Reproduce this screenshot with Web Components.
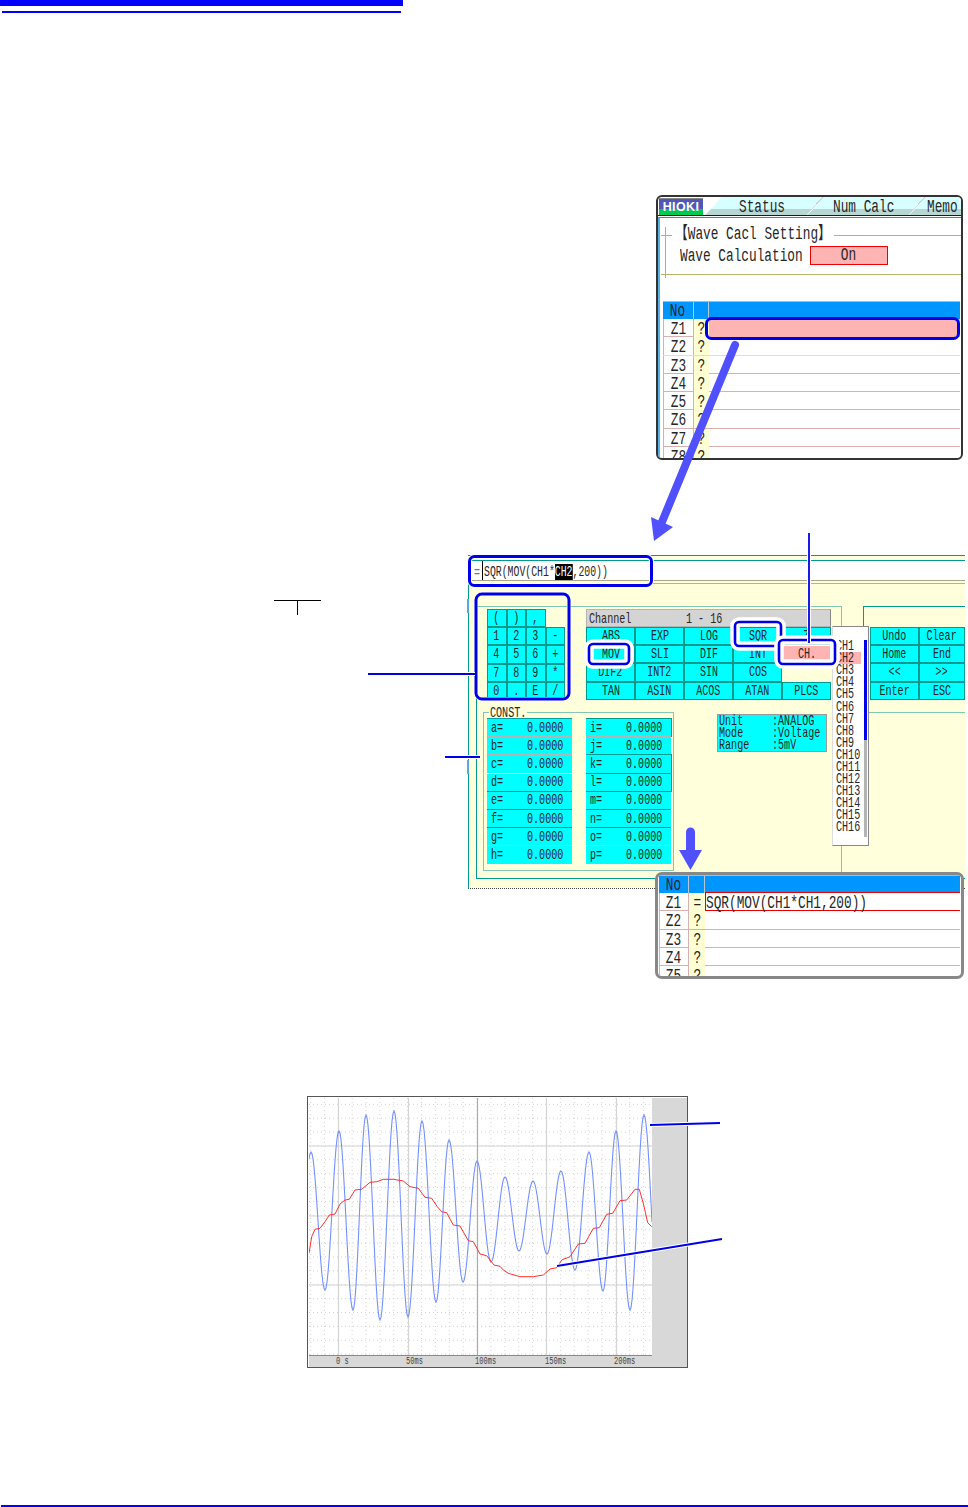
<!DOCTYPE html>
<html>
<head>
<meta charset="utf-8">
<title>Wave Calc</title>
<style>
    html, body { margin: 0; background: #fff; }
</style>
</head>
<body>
<hm-page>
    <hm-calc-window>
        <hm-calc-table rows="8" selected style="--no-w:31px;--flag-w:15px"></hm-calc-table>
    </hm-calc-window>
    <hm-editor></hm-editor>
    <hm-result-window>
        <hm-calc-table rows="5" formula="SQR(MOV(CH1*CH1,200))" style="--no-w:30px;--flag-w:16px"></hm-calc-table>
    </hm-result-window>
    <hm-wave-chart></hm-wave-chart>
    <hm-callouts></hm-callouts>
</hm-page>

<script>
const SCREEN_FONT = '"Liberation Mono","Noto Sans CJK JP",monospace';
const CYAN = '#00ffff';
const CREAM = '#ffffdc';
const TEAL = '#009a90';
const TEAL_LIGHT = '#80c8b4';
const PINK = '#ffb4b4';

// the instrument font is tall and narrow, so a mono font gets squeezed
class HmText extends HTMLElement {
    constructor() {
        super();
        this.attachShadow({ mode: 'open' });
        this.shadowRoot.innerHTML = `<style>
        :host {
            display: inline-block;
            font: 14.4px/12px ${SCREEN_FONT};
            color: #262626;
            white-space: pre;
            transform: scaleX(.7);
            transform-origin: var(--hm-origin, left center);
        }
        :host([big]) {
            font-size: 17.5px;
            line-height: 15px;
            transform: scaleX(.73);
        }
        </style><slot></slot>`;
    }
}
customElements.define('hm-t', HmText);

class HmPage extends HTMLElement {
    constructor() {
        super();
        this.attachShadow({ mode: 'open' });
        this.shadowRoot.innerHTML = `<style>
        :host {
            display: flex;
            flex-direction: column;
            position: relative;
            width: 968px;
            height: 1507px;
            overflow: hidden;
            background: #fff;
        }
        .top { width: 403px; height: 6px; background: #0000ff; }
        .sub { width: 399px; height: 2px; margin: 5px 0 0 2px; background: #0000ff; }
        .bottom { height: 2px; margin: auto 0 0 1px; background: #0000ff; }
        </style>
        <div class="top"></div>
        <div class="sub"></div>
        <slot></slot>
        <div class="bottom"></div>`;
    }
}
customElements.define('hm-page', HmPage);

class HmKey extends HTMLElement {
    constructor() {
        super();
        this.attachShadow({ mode: 'open' });
        this.shadowRoot.innerHTML = `<style>
        :host {
            --hm-origin: center;
            display: flex;
            align-items: center;
            justify-content: center;
            box-sizing: border-box;
            min-width: 0;
            background: ${CYAN};
            border: 1px solid ${TEAL};
        }
        :host([active]) {
            background: ${PINK};
            border-color: #fff;
        }
        </style><hm-t><slot></slot></hm-t>`;
    }
}
customElements.define('hm-key', HmKey);

class HmCalcTable extends HTMLElement {
    constructor() {
        super();
        this.attachShadow({ mode: 'open' });
    }
    connectedCallback() {
        const count = Number(this.getAttribute('rows')) || 4;
        const formula = this.getAttribute('formula') || '';
        const selected = this.hasAttribute('selected');
        let rows = '';
        for (let n = 1; n <= count; n++) {
            const first = n == 1;
            const cls = first ? (selected ? 'pink' : (formula ? 'redline' : '')) : '';
            rows += `<div class="row ${n == 2 && selected ? 'soft' : ''}">
                <div class="no"><hm-t big>Z${n}</hm-t></div>
                <div class="flag"><hm-t big>${first && formula ? '=' : '?'}</hm-t></div>
                <div class="text ${cls}"><hm-t big>${first ? formula : ''}</hm-t></div>
            </div>`;
        }
        this.shadowRoot.innerHTML = `<style>
        :host { display: block; --hm-origin: center; }
        .row {
            display: grid;
            grid-template-columns: var(--no-w) var(--flag-w) 1fr;
            height: 18.3px;
            box-sizing: border-box;
            border-bottom: 1px solid #d8b0b0;
        }
        .row.soft { border-bottom-color: #ead8e0; }
        .row > div { display: flex; align-items: center; justify-content: center; min-width: 0; box-sizing: border-box; padding-top: 3px; }
        .no { border-left: 1px solid #d8b0b0; border-right: 1px solid #d8b0b0; }
        .flag { background: #ffffd4; }
        .row > .text { --hm-origin: left center; justify-content: flex-start; }
        .pink { background: ${PINK}; }
        .redline { border: 1px solid #e80000; border-right: 0; height: 19px; margin-top: -1px; background: #fff; }
        .head {
            height: 18px;
            background: #0096ff;
            border-top: 1px solid #b8b8b8;
            border-bottom: 0;
        }
        .head > div { padding-top: 2px !important; }
        .head .no { border: 0; border-right: 1px solid #b8c8d8; }
        .head .flag { background: none; border-right: 1px solid #b8c8d8; }
        </style>
        <div class="row head">
            <div class="no"><hm-t big>No</hm-t></div>
            <div class="flag"></div>
            <div></div>
        </div>
        ${rows}`;
    }
}
customElements.define('hm-calc-table', HmCalcTable);

class HmCalcWindow extends HTMLElement {
    constructor() {
        super();
        this.attachShadow({ mode: 'open' });
        this.shadowRoot.innerHTML = `<style>
        :host {
            display: block;
            position: absolute;
            left: 656px;
            top: 195px;
            width: 307px;
            height: 265px;
            box-sizing: border-box;
            border: 2px solid #333;
            border-radius: 6px;
            background: #fff;
            overflow: hidden;
        }
        .bar {
            display: flex;
            height: 18px;
            box-sizing: border-box;
            padding: 1px 0 0 1px;
        }
        .logo {
            width: 44px;
            height: 17px;
            flex: none;
            display: flex;
            align-items: flex-start;
            justify-content: center;
            box-sizing: border-box;
            padding-top: 2px;
            border-top: 1px solid #888;
            background: linear-gradient(#5058b4 0 62%, #00c850 62%);
            color: #fff;
            font: bold 12.5px/1 "Liberation Sans", sans-serif;
            letter-spacing: .4px;
        }
        .tabs {
            flex: 1;
            min-width: 0;
            margin: -1px 0 0 2px;
            height: 18px;
            display: flex;
            clip-path: polygon(17px 0, 100% 0, 100% 100%, 0 100%);
            background: linear-gradient(#d8ffff 0 12px, #b8d6d2 12px);
        }
        .tab {
            position: relative;
            flex: 0 0 102px;
            min-width: 0;
            box-sizing: border-box;
            display: flex;
            align-items: center;
            padding-top: 3px;
        }
        .tab hm-t { flex: none; }
        .tab::before {
            content: "";
            position: absolute;
            left: 0;
            top: 0;
            width: 17px;
            height: 100%;
            background: linear-gradient(to bottom right, transparent calc(50% - 1px), #c4c4c4 calc(50% - 1px), #fff calc(50% + .5px), transparent calc(50% + .5px));
        }
        .tab.memo { flex-basis: 52px; padding-left: 18px; }
        .rule { height: 1px; background: #00204a; }
        .panel {
            position: relative;
            height: 100%;
            border-left: 2px solid #58b0e8;
            margin-top: 1px;
            border-top: 1px solid #0096ff;
            box-sizing: border-box;
        }
        .section { position: relative; margin: 9px 0 0 1px; }
        .section::before {
            content: "";
            position: absolute;
            left: 4px;
            top: 0;
            width: 1px;
            height: 51px;
            background: #b4b46e;
        }
        .title { display: grid; grid-template-columns: 11px 162px 1fr; height: 16px; align-items: center; }
        .title i { display: block; height: 1px; background: #b4b46e; }
        .title hm-t { margin: -1px 0 0 3px; }
        .wave { display: grid; grid-template-columns: 130px 78px; margin: 3px 0 0 0; padding-left: 19px; height: 19px; align-items: center; }
        .wave > hm-t { margin-top: 1px; }
        .on {
            height: 19px;
            box-sizing: border-box;
            display: flex;
            align-items: center;
            justify-content: center;
            --hm-origin: center;
            background: ${PINK};
            border: 1px solid #f00000;
        }
        .line { height: 1px; margin-top: 9px; background: #b4b46e; }
        .table { margin: 26px 1px 0 3px; }
        </style>
        <div class="bar">
            <div class="logo">HIOKI</div>
            <div class="tabs">
                <div class="tab" style="padding-left:34px"><hm-t big>Status</hm-t></div>
                <div class="tab" style="padding-left:26px"><hm-t big>Num Calc</hm-t></div>
                <div class="tab memo"><hm-t big>Memo</hm-t></div>
            </div>
        </div>
        <div class="rule"></div>
        <div class="panel">
            <div class="section">
                <div class="title"><i></i><hm-t big>【Wave Cacl Setting】</hm-t><i></i></div>
                <div class="wave"><hm-t big>Wave Calculation</hm-t><div class="on"><hm-t big>On</hm-t></div></div>
                <div class="line"></div>
            </div>
            <div class="table"><slot></slot></div>
        </div>`;
    }
}
customElements.define('hm-calc-window', HmCalcWindow);

class HmResultWindow extends HTMLElement {
    constructor() {
        super();
        this.attachShadow({ mode: 'open' });
        this.shadowRoot.innerHTML = `<style>
        :host {
            display: block;
            position: absolute;
            left: 655px;
            top: 872px;
            width: 309px;
            height: 107px;
            box-sizing: border-box;
            border: 3px solid #888;
            border-radius: 7px;
            padding: 0 1px 0 1px;
            background: #fff;
            overflow: hidden;
        }
        </style><slot></slot>`;
    }
}
customElements.define('hm-result-window', HmResultWindow);

class HmKeypad extends HTMLElement {
    constructor() {
        super();
        this.attachShadow({ mode: 'open' });
        const keys = ['(', ')', ',', '', '1', '2', '3', '-', '4', '5', '6', '+', '7', '8', '9', '*', '0', '.', 'E', '/'];
        this.shadowRoot.innerHTML = `<style>
        :host {
            display: grid;
            grid-template-columns: repeat(4, 19.5px);
            grid-auto-rows: 18.2px;
            flex: none;
        }
        </style>` + keys.map(k => k ? `<hm-key>${k}</hm-key>` : '<span></span>').join('');
    }
}
customElements.define('hm-keypad', HmKeypad);

class HmChannelPanel extends HTMLElement {
    constructor() {
        super();
        this.attachShadow({ mode: 'open' });
        const keys = ['ABS', 'EXP', 'LOG', 'SQR', 'Z', 'MOV', 'SLI', 'DIF', 'INT', 'CH.',
            'DIF2', 'INT2', 'SIN', 'COS', '', 'TAN', 'ASIN', 'ACOS', 'ATAN', 'PLCS'];
        this.shadowRoot.innerHTML = `<style>
        :host { display: block; width: 245px; margin-left: 21px; flex: none; }
        .head {
            display: flex;
            height: 18px;
            box-sizing: border-box;
            align-items: center;
            padding: 1px 0 0 2px;
            background: #d4d4d4;
            border: 1px solid #b4b4b4;
            border-right-color: #888;
        }
        .head hm-t:last-child { margin-left: 37px; }
        .grid { display: grid; grid-template-columns: repeat(5, 49px); grid-auto-rows: 18.2px; }
        </style>
        <div class="head"><hm-t>Channel</hm-t><hm-t>1 - 16</hm-t></div>
        <div class="grid">` + keys.map(k => k ? `<hm-key ${k == 'CH.' ? 'active' : ''}>${k}</hm-key>` : '<span></span>').join('') + `</div>`;
    }
}
customElements.define('hm-channel-panel', HmChannelPanel);

class HmConstPanel extends HTMLElement {
    constructor() {
        super();
        this.attachShadow({ mode: 'open' });
        const left = ['a', 'b', 'c', 'd', 'e', 'f', 'g', 'h'];
        const right = ['i', 'j', 'k', 'l', 'm', 'n', 'o', 'p'];
        const leftEdge = ['#00a0a0', '#b4b4b4', '#b4b4b4', '#f0ffff', TEAL, TEAL, TEAL, '#a0d0d0'];
        const rightEdge = [TEAL, '#b4b4b4', TEAL, TEAL, TEAL, TEAL, TEAL, '#a0d0d0'];
        const cell = (name, edge, boxed) => `<div class="cell ${boxed ? 'boxed' : ''}" style="border-top-color:${edge}">
            <hm-t>${name}=</hm-t><hm-t>0.0000</hm-t></div>`;
        this.shadowRoot.innerHTML = `<style>
        :host {
            display: block;
            position: relative;
            width: 191px;
            height: 159px;
            box-sizing: border-box;
            margin-left: 6px;
            padding: 5px 0 0 3px;
            border: 1px solid ${TEAL_LIGHT};
            flex: none;
        }
        .legend { position: absolute; left: 5px; top: -7px; padding: 0 1px; width: 36px; height: 12px; line-height: 12px; background: ${CREAM}; }
        .cols { display: grid; grid-template-columns: 85px 85px; column-gap: 13.5px; }
        .col { display: grid; grid-template-columns: minmax(0, 1fr); grid-auto-rows: 18.2px; }
        .cell {
            display: grid;
            grid-template-columns: 36px minmax(0, 1fr);
            align-items: center;
            box-sizing: border-box;
            padding-left: 4px;
            background: ${CYAN};
            border-top: 1px solid;
        }
        .cell.boxed { box-shadow: 1px 1px 0 ${TEAL}, 1px 0 0 ${TEAL}; }
        </style>
        <div class="legend"><hm-t>CONST.</hm-t></div>
        <div class="cols">
            <div class="col">${left.map((n, i) => cell(n, leftEdge[i], false)).join('')}</div>
            <div class="col">${right.map((n, i) => cell(n, rightEdge[i], i == 0 || i == 2 || i == 3)).join('')}</div>
        </div>`;
    }
}
customElements.define('hm-const-panel', HmConstPanel);

class HmChannelMenu extends HTMLElement {
    constructor() {
        super();
        this.attachShadow({ mode: 'open' });
        let items = '';
        for (let n = 1; n <= 16; n++) {
            items += `<div class="item ${n == 2 ? 'on' : ''}"><hm-t>CH${n}</hm-t></div>`;
        }
        this.shadowRoot.innerHTML = `<style>
        :host {
            display: flex;
            position: absolute;
            left: 355px;
            top: 20px;
            width: 37px;
            height: 220px;
            box-sizing: border-box;
            background: #fff;
            border: 1px solid #888;
            border-left-color: #ddd;
            padding-top: 13px;
        }
        .list { flex: 1; min-width: 0; }
        .item { height: 12.1px; display: flex; align-items: center; padding-left: 3px; }
        .item.on { background: linear-gradient(${PINK}, ${PINK}) 6px 0 / 22px 100% no-repeat; }
        .track { width: 3px; height: 197px; margin-right: 1px; background: #b4b4b4; }
        .thumb { height: 100px; background: #0000e8; }
        </style>
        <div class="list">${items}</div>
        <div class="track"><div class="thumb"></div></div>`;
    }
}
customElements.define('hm-channel-menu', HmChannelMenu);

class HmEditor extends HTMLElement {
    constructor() {
        super();
        this.attachShadow({ mode: 'open' });
        const side = ['Undo', 'Clear', 'Home', 'End', '<<', '>>', 'Enter', 'ESC'];
        this.shadowRoot.innerHTML = `<style>
        :host {
            display: block;
            position: absolute;
            left: 468px;
            top: 555px;
            width: 497px;
            height: 334px;
            background: ${CREAM};
        }
        .head { border-top: 1px solid ${TEAL}; border-bottom: 1px solid ${TEAL_LIGHT}; height: 29px; box-sizing: border-box; }
        .input {
            display: flex;
            align-items: center;
            height: 21px;
            margin-top: 4px;
            box-sizing: border-box;
            padding-left: 6px;
            background: #fff;
            border-top: 1px solid ${TEAL};
            border-bottom: 1px solid #a8a888;
        }
        .input .eq { width: 8px; padding-top: 3px; }
        .input .eq hm-t { color: #777; }
        .value { border-left: 1px solid #000; height: 100%; box-sizing: border-box; display: flex; align-items: center; padding: 3px 0 0 1px; }
        .value hm-t { transform: scaleX(.683); }
        mark { background: #000; color: #fff; }
        .body {
            position: relative;
            height: 305px;
            box-sizing: border-box;
            border-left: 1px solid ${TEAL};
            border-bottom: 1px dotted #444;
            padding: 22px 0 0 7px;
        }
        .tick { position: absolute; left: -2px; width: 2px; height: 14px; background: #58a8e0; }
        .frames {
            position: relative;
            display: flex;
            height: 273px;
            box-sizing: border-box;
            border-left: 1px solid ${TEAL};
            border-bottom: 1px solid ${TEAL};
        }
        .left {
            width: 365px;
            flex: none;
            box-sizing: border-box;
            border-top: 1px solid ${TEAL_LIGHT};
            border-right: 1px solid ${TEAL_LIGHT};
            padding-top: 2px;
        }
        .top { display: flex; margin-left: 10px; height: 91px; }
        .bottom { display: flex; margin-top: 12px; }
        .info {
            width: 110px;
            height: 38px;
            box-sizing: border-box;
            margin: 2px 0 0 43px;
            padding: 0 1px;
            background: ${CYAN};
            border: 1px solid #999;
            display: grid;
            grid-template-columns: 53px minmax(0, 1fr);
            grid-auto-rows: 12px;
            align-items: center;
            flex: none;
        }
        .right {
            width: 102px;
            flex: none;
            height: 107px;
            margin-left: 21px;
            box-sizing: border-box;
            padding: 20px 0 0 6px;
            border-top: 1px solid ${TEAL};
            border-left: 1px solid ${TEAL};
            border-bottom: 1px solid ${TEAL_LIGHT};
        }
        .side { display: grid; grid-template-columns: 49px 46px; grid-auto-rows: 18.2px; }
        </style>
        <div class="head">
            <div class="input">
                <div class="eq"><hm-t>=</hm-t></div>
                <div class="value"><hm-t>SQR(MOV(CH1*<mark>CH2</mark>,200))</hm-t></div>
            </div>
        </div>
        <div class="body">
            <div class="tick" style="top:15px"></div>
            <div class="tick" style="top:176px"></div>
            <div class="frames">
                <div class="left">
                    <div class="top">
                        <hm-keypad></hm-keypad>
                        <hm-channel-panel></hm-channel-panel>
                    </div>
                    <div class="bottom">
                        <hm-const-panel></hm-const-panel>
                        <div class="info">
                            <hm-t>Unit</hm-t><hm-t>:ANALOG</hm-t>
                            <hm-t>Mode</hm-t><hm-t>:Voltage</hm-t>
                            <hm-t>Range</hm-t><hm-t>:5mV</hm-t>
                        </div>
                    </div>
                </div>
                <div class="right">
                    <div class="side">${side.map(k => `<hm-key>${k.replace(/</g, '&lt;').replace(/>/g, '&gt;')}</hm-key>`).join('')}</div>
                </div>
                <hm-channel-menu></hm-channel-menu>
            </div>
        </div>`;
    }
}
customElements.define('hm-editor', HmEditor);

class HmWaveChart extends HTMLElement {
    constructor() {
        super();
        this.attachShadow({ mode: 'open' });
    }
    bluePath() {
        const ext = [[297, 1290], [311, 1152], [325, 1290], [339, 1131], [353, 1310], [366, 1115], [380, 1320], [394, 1111],
            [408, 1317], [422, 1121], [436, 1302], [449, 1140], [463, 1282], [477, 1161], [491, 1262], [505, 1177],
            [519, 1251], [533, 1181], [547, 1254], [561, 1171], [575, 1270], [589, 1152], [603, 1291], [616, 1131],
            [630, 1310], [644, 1115], [658, 1290]];
        const pts = [];
        for (let i = 0; i + 1 < ext.length; i++) {
            const [x0, y0] = ext[i];
            const [x1, y1] = ext[i + 1];
            for (let x = x0; x < x1; x++) {
                const t = (x - x0) / (x1 - x0);
                const y = y0 + (y1 - y0) * (1 - Math.cos(Math.PI * t)) / 2;
                if (x >= 309 && x <= 652) pts.push(`${x},${y.toFixed(1)}`);
            }
        }
        return pts.join(' ');
    }
    redPath() {
        // read off the reference in 3x crops
        const a = [[27, 490], [35, 440], [45, 418], [60, 415], [75, 395], [88, 375], [105, 372], [120, 342], [135, 330], [148, 328],
            [165, 300], [185, 298], [210, 277], [230, 275], [250, 268], [280, 268], [310, 273], [330, 290], [355, 295], [375, 322],
            [395, 325], [412, 350], [425, 365], [440, 368], [460, 405], [480, 408], [505, 452], [520, 455], [540, 492], [560, 497],
            [582, 525], [600, 529]].map(p => [300 + p[0] / 3, 1090 + p[1] / 3]);
        const b = [[10, 540], [25, 550], [60, 560], [100, 560], [130, 555], [150, 537], [170, 533], [185, 510], [210, 500], [235, 462],
            [255, 460], [280, 415], [298, 413], [320, 373], [338, 370], [360, 332], [380, 330], [405, 298], [418, 298], [430, 340],
            [443, 398], [455, 410]].map(p => [500 + p[0] / 3, 1090 + p[1] / 3]);
        return a.concat(b).map(p => p[0].toFixed(1) + ',' + p[1].toFixed(1)).join(' ');
    }
    connectedCallback() {
        let grid = '';
        for (let x = 310.5; x < 652; x += 13.88) {
            grid += `<line x1="${x}" y1="1098" x2="${x}" y2="1355" stroke="#d4d4d4" stroke-dasharray="1 3"/>`;
        }
        for (let y = 1104.3; y < 1355; y += 13.88) {
            grid += `<line x1="309" y1="${y}" x2="652" y2="${y}" stroke="#d4d4d4" stroke-dasharray="1 3"/>`;
        }
        [1146, 1216, 1285].forEach(y => { grid += `<line x1="309" y1="${y}" x2="652" y2="${y}" stroke="#d4d4d4" stroke-width="1.2"/>`; });
        [338.5, 408.5, 546.5, 616.5].forEach(x => { grid += `<line x1="${x}" y1="1098" x2="${x}" y2="1355" stroke="#d4d4d4" stroke-width="1.2"/>`; });
        grid += `<line x1="477.5" y1="1098" x2="477.5" y2="1355" stroke="#ababab" stroke-width="1.2"/>`;
        const ticks = ['0 s', '50ms', '100ms', '150ms', '200ms'];
        this.shadowRoot.innerHTML = `<style>
        :host {
            display: grid;
            grid-template-columns: 343px 1fr;
            grid-template-rows: 257px 1fr;
            position: absolute;
            left: 307px;
            top: 1096px;
            width: 381px;
            height: 272px;
            box-sizing: border-box;
            border: 1px solid #555;
            padding: 1px;
            background: #fff;
        }
        svg { display: block; width: 343px; height: 257px; }
        .gutter { grid-column: 2; grid-row: 1 / span 2; background: #d8d8d8; margin-right: -1px; }
        .scale {
            display: grid;
            grid-template-columns: repeat(5, 69.5px);
            box-sizing: border-box;
            padding-left: 27px;
            background: #d8d8d8;
            border-top: 1px solid #b47878;
            font: 11px/11px ${SCREEN_FONT};
            color: #444;
        }
        .scale span { display: block; white-space: pre; transform: scaleX(.64); transform-origin: left center; }
        </style>
        <svg viewBox="309 1098 343 257" fill="none">
            ${grid}
            <polyline points="${this.bluePath()}" stroke="#7490ff" stroke-width="1.1"/>
            <polyline points="${this.redPath()}" stroke="#ff3030" stroke-width="1"/>
        </svg>
        <div class="gutter"></div>
        <div class="scale">${ticks.map(t => `<span>${t}</span>`).join('')}</div>`;
    }
}
customElements.define('hm-wave-chart', HmWaveChart);

class HmCallouts extends HTMLElement {
    constructor() {
        super();
        this.attachShadow({ mode: 'open' });
    }
    box(x, y, w, h, r, sw, halo) {
        return `<rect x="${x}" y="${y}" width="${w}" height="${h}" rx="${r}" stroke="#fff" stroke-width="${sw + halo}"/>
        <rect x="${x}" y="${y}" width="${w}" height="${h}" rx="${r}" stroke="#0000e8" stroke-width="${sw}"/>`;
    }
    leader(x1, y1, x2, y2) {
        return `<line x1="${x1}" y1="${y1}" x2="${x2}" y2="${y2}" stroke="#fff" stroke-width="4"/>
        <line x1="${x1}" y1="${y1}" x2="${x2}" y2="${y2}" stroke="#0000e8" stroke-width="1.8"/>`;
    }
    connectedCallback() {
        this.shadowRoot.innerHTML = `<style>
        :host { position: absolute; left: 0; top: 0; width: 968px; height: 1507px; pointer-events: none; }
        svg { display: block; }
        </style>
        <svg width="968" height="1507" viewBox="0 0 968 1507" fill="none">
            ${this.box(469.5, 556.5, 182, 29, 5, 3, 2)}
            ${this.box(476, 594, 93, 105, 6, 3, 1)}
            ${this.box(589, 644, 40, 20, 4, 2.6, 7)}
            ${this.box(735, 622, 46, 24, 4, 2.6, 7)}
            ${this.box(779, 640, 56, 24, 4, 2.6, 7)}
            <rect x="706.5" y="318.5" width="252" height="20" rx="5" stroke="#0000e8" stroke-width="3"/>
            ${this.leader(809, 533, 809, 643)}
            ${this.leader(368, 674, 475, 674)}
            ${this.leader(445, 757, 480, 757)}
            ${this.leader(650, 1125, 720, 1123)}
            ${this.leader(557, 1266, 722, 1239)}
            <path d="M274 600.5H321M297.5 600.5V615" stroke="#000"/>
            <path d="M735 345L662 522" stroke="#5050ff" stroke-width="8" stroke-linecap="round"/>
            <path d="M651 517L673 527L654 541Z" fill="#5050ff"/>
            <path d="M690.5 832V852" stroke="#5050ff" stroke-width="9" stroke-linecap="round"/>
            <path d="M679 850H702L690.5 870Z" fill="#5050ff"/>
        </svg>`;
    }
}
customElements.define('hm-callouts', HmCallouts);
</script>
</body>
</html>
